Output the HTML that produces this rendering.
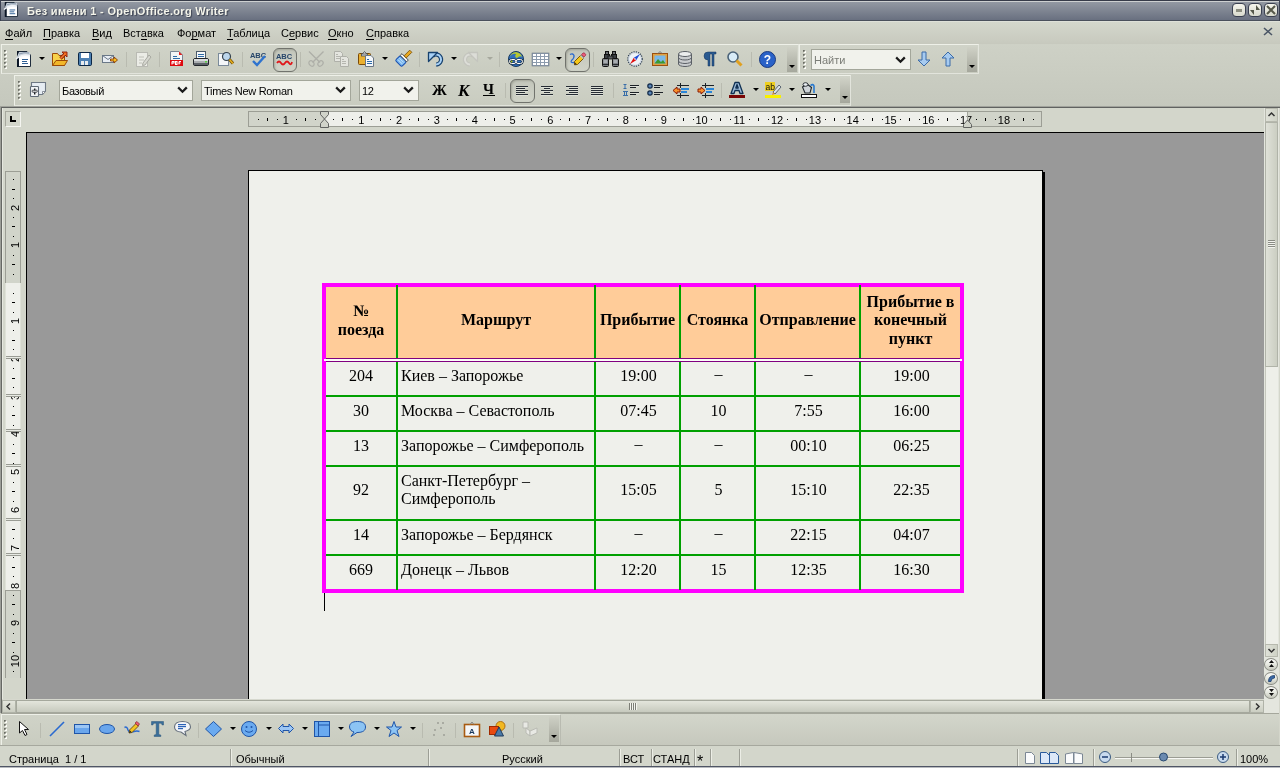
<!DOCTYPE html>
<html><head><meta charset="utf-8">
<style>
*{margin:0;padding:0;box-sizing:border-box}
html,body{width:1280px;height:768px;overflow:hidden;background:#d4d6cb;font-family:"Liberation Sans",sans-serif;font-size:11px;color:#000}
.a{position:absolute}
svg{position:absolute;overflow:visible}
#title{left:0;top:0;width:1280px;height:21px;background:linear-gradient(#959ba4,#697080);border-top:1px solid #363b48;border-bottom:1px solid #4a505c;box-shadow:inset 0 1px 0 #cdd0d0}
#title .t{left:27px;top:4px;font-size:11px;font-weight:bold;color:#f4f4ea;text-shadow:1px 1px 1px #3c4250;white-space:nowrap;letter-spacing:0.32px}
.wb{top:2px;width:14px;height:14px;border:1px solid #3a4050;border-radius:4px;background:linear-gradient(#f4f4ec,#d8dacd)}
#menu{left:0;top:21px;width:1280px;height:23px;background:linear-gradient(#d4d7cc,#c7c9be);border-top:1px solid #dfe1d9}
#menu span{position:absolute;top:5px;white-space:nowrap}
#menu u{text-decoration:none;border-bottom:1px solid #000}
#dock{left:0;top:44px;width:1280px;height:64px;background:linear-gradient(#ced1c6,#c5c8bd);border-bottom:1px solid #606260;box-shadow:inset 0 -1px 0 #a0a29b}
.tb{background:linear-gradient(#d0d3c8,#c9ccc0);border-top:1px solid #eef0e8;border-left:1px solid #eef0e8;border-bottom:1px solid #e2e4dc;border-right:1px solid #e2e4dc}
.sep{width:1px;background:#b9bbb0}
.grip{width:4px;background:repeating-linear-gradient(transparent 0 0px,#7c7e75 0px 1px,#8e9087 1px 2px,#fcfcf7 2px 3px,transparent 3px 4px);-webkit-mask:linear-gradient(90deg,#000 0 3px,transparent 3px)}
.dd{width:0;height:0;border-left:3px solid transparent;border-right:3px solid transparent;border-top:3px solid #000}
.ddg{width:0;height:0;border-left:3px solid transparent;border-right:3px solid transparent;border-top:3px solid #a6a89d}
.ovf{width:10px;background:linear-gradient(#cfd1c6,#a5a79c)}
.ovf:after{content:"";position:absolute;left:2px;bottom:4px;border-left:3px solid transparent;border-right:3px solid transparent;border-top:3px solid #000}
.press{border:1px solid #71736d;border-radius:6px;background:linear-gradient(#c3c6bb,#d0d3c8);box-shadow:inset 1px 1px 2px #a4a79b}
.combo{background:#f1f2ec;border:1px solid #a3a69a;font-size:11px;white-space:nowrap;letter-spacing:-0.3px}
.combo span{position:absolute;left:2px;top:4px}
.doc{background:#999}
.cell{position:absolute;font-family:"Liberation Serif",serif;font-size:16px;line-height:18px;white-space:nowrap;text-align:center}
.hd{font-weight:bold}
.st{position:absolute;top:753px;font-size:11px;white-space:nowrap}
.ssep{position:absolute;top:749px;width:2px;height:17px;border-left:1px solid #9c9e95;border-right:1px solid #eceee6}
</style></head><body><div id="wrap" style="position:absolute;left:0;top:0;width:1280px;height:768px;overflow:hidden;will-change:transform">
<div id="title" class="a">
<svg style="left:3px;top:1px" width="15" height="15" viewBox="0 0 16 16"><path d="M2.5 0.5 L12 0.5 L15.5 4 L15.5 15.5 L2.5 15.5Z" fill="#fff" stroke="#1e2c3c"/><rect x="2" y="0" width="2" height="16" fill="#0b1626"/><path d="M1 8 Q6 2 15 4 L15 1 L4 1 Z" fill="#c9d2dc"/><path d="M1 8 Q7 3 15 5" stroke="#eef2f6" stroke-width="1.3" fill="none"/><path d="M4 3 Q9 1 14 2" stroke="#8898aa" stroke-width="1" fill="none"/><rect x="7" y="8" width="6" height="1" fill="#2e5f94"/><rect x="7" y="10" width="5" height="1" fill="#2e5f94"/><rect x="7" y="12" width="6" height="1" fill="#2e5f94"/></svg>
<div class="a t">Без имени 1 - OpenOffice.org Writer</div>
<div class="a wb" style="left:1232px"><div class="a" style="left:3px;top:5px;width:6px;height:3px;background:#8c8e80"></div></div>
<div class="a wb" style="left:1248px"><svg style="left:1px;top:1px" width="10" height="10"><path d="M6 0 L10 5 L6 5Z M0 5 L4 5 L4 10Z" fill="#55584a"/></svg></div>
<div class="a wb" style="left:1264px"><svg style="left:1px;top:1px" width="10" height="10"><path d="M1 1 L9 9 M9 1 L1 9" stroke="#55584a" stroke-width="2"/></svg></div>
</div>
<div id="menu" class="a">
<span style="left:5px"><u>Ф</u>айл</span>
<span style="left:43px"><u>П</u>равка</span>
<span style="left:92px"><u>В</u>ид</span>
<span style="left:123px">Вст<u>а</u>вка</span>
<span style="left:177px">Фо<u>р</u>мат</span>
<span style="left:227px"><u>Т</u>аблица</span>
<span style="left:281px">С<u>е</u>рвис</span>
<span style="left:328px"><u>О</u>кно</span>
<span style="left:366px"><u>С</u>правка</span>
<svg style="left:1263px;top:5px" width="10" height="9"><path d="M1 1 L9 8 M9 1 L1 8" stroke="#4a5565" stroke-width="1.6"/></svg>
</div>
<div id="dock" class="a"></div>
<div class="a tb" style="left:1px;top:44px;width:798px;height:30px"></div>
<div class="a tb" style="left:799px;top:44px;width:180px;height:30px"></div>
<div class="a tb" style="left:14px;top:75px;width:837px;height:31px"></div>
<svg style="left:4px;top:50px" width="3" height="3"><rect x="0" y="0" width="2" height="2" fill="#7e8077"/><rect x="1" y="1" width="2" height="2" fill="#fdfdf8"/><rect x="0" y="0" width="1" height="1" fill="#6a6c64"/><rect x="1" y="1" width="1" height="1" fill="#b5b7ad"/></svg>
<svg style="left:4px;top:54px" width="3" height="3"><rect x="0" y="0" width="2" height="2" fill="#7e8077"/><rect x="1" y="1" width="2" height="2" fill="#fdfdf8"/><rect x="0" y="0" width="1" height="1" fill="#6a6c64"/><rect x="1" y="1" width="1" height="1" fill="#b5b7ad"/></svg>
<svg style="left:4px;top:58px" width="3" height="3"><rect x="0" y="0" width="2" height="2" fill="#7e8077"/><rect x="1" y="1" width="2" height="2" fill="#fdfdf8"/><rect x="0" y="0" width="1" height="1" fill="#6a6c64"/><rect x="1" y="1" width="1" height="1" fill="#b5b7ad"/></svg>
<svg style="left:4px;top:62px" width="3" height="3"><rect x="0" y="0" width="2" height="2" fill="#7e8077"/><rect x="1" y="1" width="2" height="2" fill="#fdfdf8"/><rect x="0" y="0" width="1" height="1" fill="#6a6c64"/><rect x="1" y="1" width="1" height="1" fill="#b5b7ad"/></svg>
<svg style="left:4px;top:66px" width="3" height="3"><rect x="0" y="0" width="2" height="2" fill="#7e8077"/><rect x="1" y="1" width="2" height="2" fill="#fdfdf8"/><rect x="0" y="0" width="1" height="1" fill="#6a6c64"/><rect x="1" y="1" width="1" height="1" fill="#b5b7ad"/></svg>
<svg style="left:15px;top:51px" width="16" height="16" viewBox="0 0 16 16"><path d="M2.5 0.5 L12 0.5 L15.5 4 L15.5 15.5 L2.5 15.5Z" fill="#fff" stroke="#1e2c3c"/><rect x="2" y="0" width="2" height="16" fill="#0b1626"/><path d="M1 8 Q6 2 15 4 L15 1 L4 1 Z" fill="#c9d2dc"/><path d="M1 8 Q7 3 15 5" stroke="#eef2f6" stroke-width="1.3" fill="none"/><path d="M4 3 Q9 1 14 2" stroke="#8898aa" stroke-width="1" fill="none"/><rect x="7" y="8" width="6" height="1" fill="#2e5f94"/><rect x="7" y="10" width="5" height="1" fill="#2e5f94"/><rect x="7" y="12" width="6" height="1" fill="#2e5f94"/></svg>
<div class="a dd" style="left:39px;top:57px"></div>
<svg style="left:52px;top:51px" width="16" height="16" viewBox="0 0 16 16"><path d="M0.5 2.5 L5.5 2.5 L7 4.5 L12.5 4.5 L12.5 14.5 L0.5 14.5Z" fill="#f7d24a" stroke="#9c4a08"/><path d="M4 9.5 L15.5 9.5 L12.5 14.5 L0.5 14.5Z" fill="#f2b72a" stroke="#9c4a08"/><path d="M8.5 7.5 L13 3" stroke="#8a1c08" stroke-width="3.2"/><path d="M10 1 L15 1 L15 6Z" fill="#f06a1c" stroke="#8a1c08" stroke-width="0.9"/><path d="M8.5 7.5 L13 3" stroke="#f47a2a" stroke-width="1.6"/></svg>
<svg style="left:77px;top:51px" width="16" height="16" viewBox="0 0 16 16"><rect x="1.5" y="1.5" width="13" height="13" rx="1.2" fill="#4d80b2" stroke="#0c2746"/><rect x="4" y="2" width="8" height="5" fill="#fff"/><rect x="4" y="10" width="3" height="4" fill="#e8ecef"/><rect x="8" y="10" width="3" height="4" fill="#e8ecef"/></svg>
<svg style="left:101px;top:48px" width="17" height="17" viewBox="0 0 17 17"><rect x="1.5" y="7.5" width="11" height="7" fill="#e9eef4" stroke="#6a7888"/><path d="M1.5 7.5 L7 11.5 L12.5 7.5" stroke="#6a7888" fill="none"/><path d="M9.5 11 L13 11 L13 9 L16.5 12 L13 15 L13 13 L9.5 13Z" fill="#f8c020" stroke="#8a3a06" stroke-width="0.9"/></svg>
<div class="a sep" style="left:126px;top:52px;height:15px"></div>
<svg style="left:135px;top:51px" width="16" height="16" viewBox="0 0 16 16"><rect x="1.5" y="1.5" width="11" height="14" fill="#ebece6" stroke="#b9bab3"/><path d="M4 6h5M4 9h5M4 12h3" stroke="#bfc0b8"/><path d="M8 12 L14 4 L16 6 L10 14 L7.5 14.5Z" fill="#d6d7d0" stroke="#a9aaa2"/></svg>
<div class="a sep" style="left:159px;top:52px;height:15px"></div>
<svg style="left:168px;top:51px" width="16" height="16" viewBox="0 0 16 16"><path d="M2.5 0.5 L11 0.5 L14.5 4 L14.5 14.5 L2.5 14.5Z" fill="#f2f4f6" stroke="#7a8694"/><path d="M11 0.5 L14.5 4 L11 4Z" fill="#e02020"/><rect x="2" y="9" width="13" height="6" fill="#de0a10"/><path d="M4 10.5v3M4 10.5h2v1.5h-2M7.5 10.5v3h1.5v-3zM11 10.5v3M11 10.5h2M11 12h1.5" stroke="#fff" stroke-width="1.1" fill="none"/><rect x="5" y="5" width="4" height="1" fill="#2d6aa8"/><rect x="5" y="7" width="7" height="1" fill="#2d6aa8"/></svg>
<svg style="left:193px;top:51px" width="16" height="16" viewBox="0 0 16 16"><rect x="3.5" y="0.5" width="9" height="8" fill="#f6f8fa" stroke="#4a5a6a"/><rect x="5" y="3" width="6" height="1" fill="#2d6aa8"/><rect x="5" y="5" width="6" height="1" fill="#2d6aa8"/><rect x="0.5" y="7.5" width="15" height="7" rx="1.5" fill="#a9adb0" stroke="#22272c"/><rect x="1" y="8" width="14" height="2" fill="#d9dcde"/><rect x="1" y="12" width="14" height="2" fill="#5b6066"/><rect x="12" y="10" width="2" height="1.5" fill="#58d040"/></svg>
<svg style="left:218px;top:51px" width="16" height="16" viewBox="0 0 16 16"><rect x="0.5" y="2.5" width="10" height="12" fill="#f4f6f8" stroke="#7a8a9a"/><circle cx="8.5" cy="5.5" r="4" fill="#bcd6ec" stroke="#33404c" stroke-width="1.2"/><path d="M11.5 8.5 L15 12.5" stroke="#6a4a00" stroke-width="3"/><path d="M11.5 8.5 L15 12.5" stroke="#e8b020" stroke-width="1.6"/></svg>
<div class="a sep" style="left:242px;top:52px;height:15px"></div>
<svg style="left:250px;top:51px" width="17" height="16" viewBox="0 0 17 16"><text x="8" y="7" font-size="7.5" font-weight="bold" fill="#27466a" text-anchor="middle" font-family="Liberation Sans">ABC</text><path d="M3 10 L7 14 L15 5" stroke="#2f74cf" stroke-width="2.4" fill="none"/></svg>
<div class="a press" style="left:273px;top:48px;width:24px;height:24px"></div>
<svg style="left:276px;top:51px" width="16" height="16" viewBox="0 0 16 16"><text x="8" y="8" font-size="7.5" font-weight="bold" fill="#27466a" text-anchor="middle" font-family="Liberation Sans">ABC</text><path d="M1 12 Q3 9 5 12 T9 12 T13 12 T16 11" stroke="#e0161a" stroke-width="1.8" fill="none"/></svg>
<div class="a sep" style="left:300px;top:52px;height:15px"></div>
<svg style="left:308px;top:51px" width="16" height="16" viewBox="0 0 16 16"><path d="M1 0.5 L12 11.5 M15.5 0.5 L4.5 11.5" stroke="#aeafa8" stroke-width="1.4"/><g transform="rotate(45 3.5 12.5)"><ellipse cx="3.5" cy="12.5" rx="3" ry="2.2" fill="none" stroke="#aeafa8" stroke-width="1.2"/></g><g transform="rotate(-45 12.5 12.5)"><ellipse cx="12.5" cy="12.5" rx="3" ry="2.2" fill="none" stroke="#aeafa8" stroke-width="1.2"/></g></svg>
<svg style="left:333px;top:51px" width="16" height="16" viewBox="0 0 16 16"><path d="M1.5 0.5 L7.5 0.5 L9.5 2.5 L9.5 10.5 L1.5 10.5Z" fill="#e4e5df" stroke="#afb0a9"/><rect x="3" y="3" width="2" height="1" fill="#b5b6af"/><rect x="3" y="5" width="4" height="1" fill="#b5b6af"/><rect x="3" y="7" width="4" height="1" fill="#b5b6af"/><path d="M7.5 5.5 L13.5 5.5 L15.5 7.5 L15.5 15.5 L7.5 15.5Z" fill="#e4e5df" stroke="#afb0a9"/><rect x="9" y="8" width="2" height="1" fill="#b5b6af"/><rect x="9" y="10" width="4" height="1" fill="#b5b6af"/><rect x="9" y="12" width="4" height="1" fill="#b5b6af"/></svg>
<svg style="left:358px;top:51px" width="16" height="16" viewBox="0 0 16 16"><rect x="0.5" y="2.5" width="12" height="11" rx="1" fill="#eab030" stroke="#7a4a08"/><path d="M4 3.5 L6.5 0.5 L9 3.5Z" fill="#e6e8ea" stroke="#4a4e52" stroke-width="0.9"/><rect x="3.5" y="3" width="6" height="2" fill="#d6d9dc" stroke="#4a4e52" stroke-width="0.8"/><path d="M7.5 4.5 L13 4.5 L15.5 7 L15.5 15.5 L7.5 15.5Z" fill="#f4f7fa" stroke="#6a7684"/><rect x="9" y="8" width="2" height="1" fill="#2d6aa8"/><rect x="9" y="10" width="5" height="1" fill="#2d6aa8"/><rect x="9" y="12" width="5" height="1" fill="#2d6aa8"/></svg>
<div class="a dd" style="left:382px;top:57px"></div>
<svg style="left:395px;top:50px" width="16" height="16" viewBox="0 0 16 16"><g transform="rotate(45 8 9)"><rect x="3.5" y="8.5" width="9" height="7" rx="1.5" fill="#7ab8f0" stroke="#1a50b0"/><path d="M5 11h6M5 13h6" stroke="#d8ecfc" stroke-width="0.8"/><rect x="3.5" y="6" width="9" height="2.5" fill="#f4f6f8" stroke="#30343a" stroke-width="0.8"/><rect x="6.5" y="-2" width="3" height="8" fill="#e8a820" stroke="#7a5008" stroke-width="0.8"/></g></svg>
<div class="a sep" style="left:419px;top:52px;height:15px"></div>
<svg style="left:427px;top:51px" width="16" height="16" viewBox="0 0 16 16"><path d="M5.5 5 A5 5 0 1 1 9 13.5" stroke="#17416e" stroke-width="4.2" fill="none"/><path d="M5.5 5 A5 5 0 1 1 9 13.5" stroke="#a8d0f4" stroke-width="2" fill="none"/><path d="M1.5 1.5 L10.5 1.5 L1.5 10.5 Z" fill="#a8d0f4" stroke="#17416e" stroke-width="1.3" stroke-linejoin="round"/></svg>
<div class="a dd" style="left:451px;top:57px"></div>
<svg style="left:463px;top:51px" width="16" height="16" viewBox="0 0 16 16"><g transform="translate(16,0) scale(-1,1)"><path d="M5.5 5 A5 5 0 1 1 9 13.5" stroke="#c4c5be" stroke-width="4.2" fill="none"/><path d="M5.5 5 A5 5 0 1 1 9 13.5" stroke="#dcddd7" stroke-width="2" fill="none"/><path d="M1.5 1.5 L10.5 1.5 L1.5 10.5 Z" fill="#dcddd7" stroke="#c4c5be" stroke-width="1.3" stroke-linejoin="round"/></g></svg>
<div class="a ddg" style="left:487px;top:57px"></div>
<div class="a sep" style="left:499px;top:52px;height:15px"></div>
<svg style="left:508px;top:51px" width="16" height="16" viewBox="0 0 16 16"><circle cx="8" cy="8" r="7.5" fill="#2f6fc0" stroke="#1a3a5c"/><path d="M2 6 Q4 2 8 3 Q6 6 9 7 Q12 4 14 6 Q13 2 8 1 Q3 1.5 2 6Z" fill="#b8c830"/><path d="M1.5 9 Q3 8 5 10 L3 13Z" fill="#9ab828"/><rect x="1.5" y="8.5" width="6.5" height="4" rx="2" fill="none" stroke="#1a2a3a" stroke-width="2.2"/><rect x="8" y="8.5" width="6.5" height="4" rx="2" fill="none" stroke="#1a2a3a" stroke-width="2.2"/><rect x="1.5" y="8.5" width="6.5" height="4" rx="2" fill="none" stroke="#fff" stroke-width="1"/><rect x="8" y="8.5" width="6.5" height="4" rx="2" fill="none" stroke="#fff" stroke-width="1"/></svg>
<svg style="left:532px;top:53px" width="17" height="13" viewBox="0 0 17 13"><rect x="0" y="0" width="17" height="13" fill="#8d9cae"/><rect x="1" y="1" width="3" height="2" fill="#fff"/><rect x="5" y="1" width="3" height="2" fill="#fff"/><rect x="9" y="1" width="3" height="2" fill="#fff"/><rect x="13" y="1" width="3" height="2" fill="#fff"/><rect x="1" y="4" width="3" height="2" fill="#fff"/><rect x="5" y="4" width="3" height="2" fill="#fff"/><rect x="9" y="4" width="3" height="2" fill="#fff"/><rect x="13" y="4" width="3" height="2" fill="#fff"/><rect x="1" y="7" width="3" height="2" fill="#fff"/><rect x="5" y="7" width="3" height="2" fill="#fff"/><rect x="9" y="7" width="3" height="2" fill="#fff"/><rect x="13" y="7" width="3" height="2" fill="#fff"/><rect x="1" y="10" width="3" height="2" fill="#fff"/><rect x="5" y="10" width="3" height="2" fill="#fff"/><rect x="9" y="10" width="3" height="2" fill="#fff"/><rect x="13" y="10" width="3" height="2" fill="#fff"/><rect x="0" y="0" width="17" height="13" fill="none" stroke="#6d7a88" stroke-width="0.6"/></svg>
<div class="a dd" style="left:556px;top:57px"></div>
<div class="a press" style="left:565px;top:48px;width:25px;height:24px"></div>
<svg style="left:569px;top:51px" width="16" height="16" viewBox="0 0 16 16"><path d="M1 3.5 Q4 2 5 4.5 Q5.5 7 2.5 9.5 Q1 12 5 11.5 L6.5 11" stroke="#2a6ad0" stroke-width="1.3" fill="none"/><path d="M5.5 10.5 L12 4 L15 7 L8.5 13.5 L5.5 13.8Z" fill="#f6c818" stroke="#6a4a08" stroke-width="0.9"/><path d="M11 5 L14 8 L15 7 L12 4Z" fill="#b8c4d0"/><path d="M12.5 3.5 L14 2 Q15 1.5 16 2.5 L16.5 3 Q17 4 16.5 4.5 L15 6Z" fill="#ea5a78" stroke="#9a2a40" stroke-width="0.7"/><path d="M5.5 13.8 L6 11.5 L7.8 13.2Z" fill="#3a2a10"/></svg>
<div class="a sep" style="left:593px;top:52px;height:15px"></div>
<svg style="left:602px;top:51px" width="17" height="16" viewBox="0 0 17 16"><rect x="3.5" y="0.5" width="3" height="4" fill="#6a6e72" stroke="#111" stroke-width="1"/><rect x="10.5" y="0.5" width="3" height="4" fill="#6a6e72" stroke="#111" stroke-width="1"/><rect x="2.5" y="3.5" width="5" height="4" fill="#3a3e42" stroke="#111"/><rect x="9.5" y="3.5" width="5" height="4" fill="#3a3e42" stroke="#111"/><rect x="6" y="5" width="5" height="3" fill="#55595d" stroke="#111" stroke-width="0.8"/><rect x="0.5" y="7.5" width="6" height="8" rx="1" fill="#7a7e82" stroke="#111"/><rect x="10.5" y="7.5" width="6" height="8" rx="1" fill="#7a7e82" stroke="#111"/><rect x="1.5" y="9" width="4" height="3" fill="#a8acb0"/><rect x="11.5" y="9" width="4" height="3" fill="#a8acb0"/><rect x="1" y="13" width="5" height="1" fill="#2a2e32"/><rect x="11" y="13" width="5" height="1" fill="#2a2e32"/></svg>
<svg style="left:627px;top:51px" width="16" height="16" viewBox="0 0 16 16"><circle cx="8" cy="8" r="7.2" fill="#eef3f8" stroke="#2e3e50" stroke-width="1.2" stroke-dasharray="1.2 1.1"/><circle cx="8" cy="8" r="6.4" fill="none" stroke="#9aa8b8" stroke-width="0.6"/><path d="M13 3 L9.2 9.2 L6.8 6.8Z" fill="#1a4ad8"/><path d="M3 13 L6.8 6.8 L9.2 9.2Z" fill="#e01010"/><circle cx="8" cy="8" r="0.8" fill="#fff"/></svg>
<svg style="left:652px;top:51px" width="16" height="16" viewBox="0 0 16 16"><rect x="0.5" y="2.5" width="15" height="12" fill="#e0a040" stroke="#9a5010"/><rect x="2.5" y="4.5" width="11" height="8" fill="#7ab8e8"/><path d="M2.5 12.5 L6 8 L9 11 L11 9 L13.5 12.5Z" fill="#3a9a30"/><path d="M6 2.5 L8 0.5 L10 2.5" stroke="#777" fill="none"/></svg>
<svg style="left:677px;top:51px" width="16" height="16" viewBox="0 0 16 16"><path d="M1.5 3 L1.5 13 A6.5 2.5 0 0 0 14.5 13 L14.5 3" fill="#c9ccce" stroke="#5b6066"/><ellipse cx="8" cy="3" rx="6.5" ry="2.5" fill="#eceeee" stroke="#5b6066"/><path d="M1.5 6.5 A6.5 2.5 0 0 0 14.5 6.5 M1.5 10 A6.5 2.5 0 0 0 14.5 10" stroke="#5b6066" fill="none"/></svg>
<svg style="left:702px;top:51px" width="16" height="16" viewBox="0 0 16 16"><path d="M6 15 L6 9 A4 4 0 0 1 6 1 L14 1 L14 3 L12 3 L12 15 L10 15 L10 3 L8 3 L8 15Z" fill="#2a5a90" stroke="#17375c" stroke-width="0.5"/></svg>
<svg style="left:727px;top:51px" width="16" height="16" viewBox="0 0 16 16"><circle cx="6" cy="6" r="5" fill="#d8ecf8" stroke="#4a6278" stroke-width="1.6"/><path d="M9.5 9.5 L14.5 14.5" stroke="#e0a020" stroke-width="3"/></svg>
<div class="a sep" style="left:751px;top:52px;height:15px"></div>
<svg style="left:759px;top:51px" width="17" height="17" viewBox="0 0 17 17"><circle cx="8.5" cy="8.5" r="8" fill="#2a62c8" stroke="#1a3a80"/><text x="8.5" y="13" font-size="12" font-weight="bold" fill="#fff" text-anchor="middle" font-family="Liberation Sans">?</text></svg>
<div class="a ovf" style="left:787px;top:47px;height:25px"></div>
<svg style="left:803px;top:50px" width="3" height="3"><rect x="0" y="0" width="2" height="2" fill="#7e8077"/><rect x="1" y="1" width="2" height="2" fill="#fdfdf8"/><rect x="0" y="0" width="1" height="1" fill="#6a6c64"/><rect x="1" y="1" width="1" height="1" fill="#b5b7ad"/></svg>
<svg style="left:803px;top:54px" width="3" height="3"><rect x="0" y="0" width="2" height="2" fill="#7e8077"/><rect x="1" y="1" width="2" height="2" fill="#fdfdf8"/><rect x="0" y="0" width="1" height="1" fill="#6a6c64"/><rect x="1" y="1" width="1" height="1" fill="#b5b7ad"/></svg>
<svg style="left:803px;top:58px" width="3" height="3"><rect x="0" y="0" width="2" height="2" fill="#7e8077"/><rect x="1" y="1" width="2" height="2" fill="#fdfdf8"/><rect x="0" y="0" width="1" height="1" fill="#6a6c64"/><rect x="1" y="1" width="1" height="1" fill="#b5b7ad"/></svg>
<svg style="left:803px;top:62px" width="3" height="3"><rect x="0" y="0" width="2" height="2" fill="#7e8077"/><rect x="1" y="1" width="2" height="2" fill="#fdfdf8"/><rect x="0" y="0" width="1" height="1" fill="#6a6c64"/><rect x="1" y="1" width="1" height="1" fill="#b5b7ad"/></svg>
<svg style="left:803px;top:66px" width="3" height="3"><rect x="0" y="0" width="2" height="2" fill="#7e8077"/><rect x="1" y="1" width="2" height="2" fill="#fdfdf8"/><rect x="0" y="0" width="1" height="1" fill="#6a6c64"/><rect x="1" y="1" width="1" height="1" fill="#b5b7ad"/></svg>
<div class="a combo" style="left:811px;top:49px;width:100px;height:21px;color:#7b7d77;font-size:11px;letter-spacing:0"><span style="top:4px;left:2px">Найти</span></div>
<svg style="left:896px;top:57px" width="9" height="6" viewBox="0 0 9 6"><path d="M1 1.2 L4.5 4.7 L8 1.2" stroke="#1a1a1a" stroke-width="2.3" fill="none" stroke-linecap="square"/></svg>
<svg style="left:916px;top:51px" width="16" height="16" viewBox="0 0 16 16"><path d="M6 1 L10 1 L10 9 L14 9 L8 15 L2 9 L6 9Z" fill="#a7cbf0" stroke="#3a6aa8"/></svg>
<svg style="left:940px;top:51px" width="16" height="16" viewBox="0 0 16 16"><path d="M6 15 L10 15 L10 7 L14 7 L8 1 L2 7 L6 7Z" fill="#a7cbf0" stroke="#3a6aa8"/></svg>
<div class="a ovf" style="left:967px;top:47px;height:25px"></div>
<svg style="left:18px;top:81px" width="3" height="3"><rect x="0" y="0" width="2" height="2" fill="#7e8077"/><rect x="1" y="1" width="2" height="2" fill="#fdfdf8"/><rect x="0" y="0" width="1" height="1" fill="#6a6c64"/><rect x="1" y="1" width="1" height="1" fill="#b5b7ad"/></svg>
<svg style="left:18px;top:85px" width="3" height="3"><rect x="0" y="0" width="2" height="2" fill="#7e8077"/><rect x="1" y="1" width="2" height="2" fill="#fdfdf8"/><rect x="0" y="0" width="1" height="1" fill="#6a6c64"/><rect x="1" y="1" width="1" height="1" fill="#b5b7ad"/></svg>
<svg style="left:18px;top:89px" width="3" height="3"><rect x="0" y="0" width="2" height="2" fill="#7e8077"/><rect x="1" y="1" width="2" height="2" fill="#fdfdf8"/><rect x="0" y="0" width="1" height="1" fill="#6a6c64"/><rect x="1" y="1" width="1" height="1" fill="#b5b7ad"/></svg>
<svg style="left:18px;top:93px" width="3" height="3"><rect x="0" y="0" width="2" height="2" fill="#7e8077"/><rect x="1" y="1" width="2" height="2" fill="#fdfdf8"/><rect x="0" y="0" width="1" height="1" fill="#6a6c64"/><rect x="1" y="1" width="1" height="1" fill="#b5b7ad"/></svg>
<svg style="left:18px;top:97px" width="3" height="3"><rect x="0" y="0" width="2" height="2" fill="#7e8077"/><rect x="1" y="1" width="2" height="2" fill="#fdfdf8"/><rect x="0" y="0" width="1" height="1" fill="#6a6c64"/><rect x="1" y="1" width="1" height="1" fill="#b5b7ad"/></svg>
<svg style="left:29px;top:81px" width="18" height="17" viewBox="0 0 18 17"><path d="M2.5 1.5 L16.5 1.5 L16.5 10 L13.5 13.5 L2.5 13.5Z" fill="#e6ecf2" stroke="#6e7884" stroke-width="1.1"/><path d="M13.5 13.5 L13.5 10.5 L16.5 10.5Z" fill="#fff" stroke="#6e7884" stroke-width="0.8"/><rect x="1.5" y="5.5" width="8" height="10" rx="0.8" fill="#f2f4f6" stroke="#606a76" stroke-width="1.1"/><rect x="5" y="7.5" width="1.4" height="6" fill="#1a1e22"/><rect x="3.2" y="9.2" width="5" height="2" rx="0.6" fill="#fff" stroke="#2a2e32" stroke-width="0.9"/></svg>
<div class="a combo" style="left:59px;top:80px;width:134px;height:21px"><span>Базовый</span></div>
<div class="a combo" style="left:201px;top:80px;width:150px;height:21px"><span>Times New Roman</span></div>
<div class="a combo" style="left:359px;top:80px;width:60px;height:21px"><span>12</span></div>
<svg style="left:178px;top:87px" width="9" height="6" viewBox="0 0 9 6"><path d="M1 1.2 L4.5 4.7 L8 1.2" stroke="#1a1a1a" stroke-width="2.3" fill="none" stroke-linecap="square"/></svg>
<svg style="left:336px;top:87px" width="9" height="6" viewBox="0 0 9 6"><path d="M1 1.2 L4.5 4.7 L8 1.2" stroke="#1a1a1a" stroke-width="2.3" fill="none" stroke-linecap="square"/></svg>
<svg style="left:404px;top:87px" width="9" height="6" viewBox="0 0 9 6"><path d="M1 1.2 L4.5 4.7 L8 1.2" stroke="#1a1a1a" stroke-width="2.3" fill="none" stroke-linecap="square"/></svg>
<div class="a" style="left:432px;top:82px;font-family:'Liberation Serif',serif;font-weight:bold;font-size:15px">Ж</div>
<div class="a" style="left:458px;top:81px;font-family:'Liberation Serif',serif;font-weight:bold;font-style:italic;font-size:17px">К</div>
<div class="a" style="left:483px;top:82px;font-family:'Liberation Serif',serif;font-weight:bold;font-size:15px;line-height:15px">Ч</div><div class="a" style="left:483px;top:95px;width:12px;height:1px;background:#000"></div>
<div class="a sep" style="left:505px;top:83px;height:15px"></div>
<div class="a press" style="left:510px;top:79px;width:25px;height:24px"></div>
<svg style="left:516px;top:86px" width="12" height="10" viewBox="0 0 12 10"><rect x="0" y="0" width="12" height="1" fill="#262c34"/><rect x="0" y="1" width="12" height="1" fill="#eef0ea" opacity="0.5"/><rect x="0" y="2" width="9" height="1" fill="#262c34"/><rect x="0" y="3" width="9" height="1" fill="#eef0ea" opacity="0.5"/><rect x="0" y="4" width="12" height="1" fill="#262c34"/><rect x="0" y="5" width="12" height="1" fill="#eef0ea" opacity="0.5"/><rect x="0" y="6" width="9" height="1" fill="#262c34"/><rect x="0" y="7" width="9" height="1" fill="#eef0ea" opacity="0.5"/><rect x="0" y="8" width="12" height="1" fill="#262c34"/><rect x="0" y="9" width="12" height="1" fill="#eef0ea" opacity="0.5"/></svg>
<svg style="left:541px;top:86px" width="12" height="10" viewBox="0 0 12 10"><rect x="0" y="0" width="12" height="1" fill="#262c34"/><rect x="0" y="1" width="12" height="1" fill="#eef0ea" opacity="0.5"/><rect x="3" y="2" width="6" height="1" fill="#262c34"/><rect x="3" y="3" width="6" height="1" fill="#eef0ea" opacity="0.5"/><rect x="0" y="4" width="12" height="1" fill="#262c34"/><rect x="0" y="5" width="12" height="1" fill="#eef0ea" opacity="0.5"/><rect x="3" y="6" width="6" height="1" fill="#262c34"/><rect x="3" y="7" width="6" height="1" fill="#eef0ea" opacity="0.5"/><rect x="0" y="8" width="12" height="1" fill="#262c34"/><rect x="0" y="9" width="12" height="1" fill="#eef0ea" opacity="0.5"/></svg>
<svg style="left:566px;top:86px" width="12" height="10" viewBox="0 0 12 10"><rect x="0" y="0" width="12" height="1" fill="#262c34"/><rect x="0" y="1" width="12" height="1" fill="#eef0ea" opacity="0.5"/><rect x="3" y="2" width="9" height="1" fill="#262c34"/><rect x="3" y="3" width="9" height="1" fill="#eef0ea" opacity="0.5"/><rect x="0" y="4" width="12" height="1" fill="#262c34"/><rect x="0" y="5" width="12" height="1" fill="#eef0ea" opacity="0.5"/><rect x="3" y="6" width="9" height="1" fill="#262c34"/><rect x="3" y="7" width="9" height="1" fill="#eef0ea" opacity="0.5"/><rect x="0" y="8" width="12" height="1" fill="#262c34"/><rect x="0" y="9" width="12" height="1" fill="#eef0ea" opacity="0.5"/></svg>
<svg style="left:591px;top:86px" width="12" height="10" viewBox="0 0 12 10"><rect x="0" y="0" width="12" height="1" fill="#262c34"/><rect x="0" y="1" width="12" height="1" fill="#eef0ea" opacity="0.5"/><rect x="0" y="2" width="12" height="1" fill="#262c34"/><rect x="0" y="3" width="12" height="1" fill="#eef0ea" opacity="0.5"/><rect x="0" y="4" width="12" height="1" fill="#262c34"/><rect x="0" y="5" width="12" height="1" fill="#eef0ea" opacity="0.5"/><rect x="0" y="6" width="12" height="1" fill="#262c34"/><rect x="0" y="7" width="12" height="1" fill="#eef0ea" opacity="0.5"/><rect x="0" y="8" width="12" height="1" fill="#262c34"/><rect x="0" y="9" width="12" height="1" fill="#eef0ea" opacity="0.5"/></svg>
<div class="a sep" style="left:613px;top:83px;height:15px"></div>
<svg style="left:618px;top:80px" width="24" height="20" viewBox="0 0 24 20"><path d="M5 4h3M6.5 4v4M5 8h3" stroke="#3a6ea8" stroke-width="1" fill="none" transform="translate(0.5,0.5)"/><path d="M5 11h5M6.5 11v4M8.5 11v4M5 15h5" stroke="#3a6ea8" stroke-width="1" fill="none" transform="translate(0,0.5)"/><rect x="12" y="5" width="9" height="1" fill="#1c2126"/><rect x="12" y="6" width="9" height="1" fill="#f0f2ec" opacity=".6"/><rect x="12" y="7" width="6" height="1" fill="#1c2126"/><rect x="12" y="12" width="9" height="1" fill="#1c2126"/><rect x="12" y="13" width="9" height="1" fill="#f0f2ec" opacity=".6"/><rect x="12" y="14" width="6" height="1" fill="#1c2126"/></svg>
<svg style="left:643px;top:80px" width="24" height="20" viewBox="0 0 24 20"><circle cx="7" cy="6" r="2.2" fill="#5a86b8" stroke="#132a48" stroke-width="1.2"/><circle cx="7" cy="13" r="2.2" fill="#5a86b8" stroke="#132a48" stroke-width="1.2"/><rect x="11" y="5" width="9" height="1" fill="#1c2126"/><rect x="11" y="7" width="6" height="1" fill="#1c2126"/><rect x="11" y="12" width="9" height="1" fill="#1c2126"/><rect x="11" y="14" width="6" height="1" fill="#1c2126"/></svg>
<svg style="left:672px;top:80px" width="18" height="20" viewBox="0 0 18 20"><rect x="5" y="5" width="12" height="1" fill="#1c2126"/><rect x="8" y="3" width="1" height="5" fill="#1c2126"/><rect x="5" y="15" width="12" height="1" fill="#1c2126"/><rect x="8" y="13" width="1" height="5" fill="#1c2126"/><rect x="9" y="8" width="8" height="2" fill="#2a86d8"/><rect x="9" y="11" width="6" height="2" fill="#2a86d8"/><path d="M8 9 L5 9 L5 7 L1 10.5 L5 14 L5 12 L8 12Z" fill="#f8902a" stroke="#8a1a04" stroke-width="1"/></svg>
<svg style="left:697px;top:80px" width="18" height="20" viewBox="0 0 18 20"><rect x="5" y="5" width="12" height="1" fill="#1c2126"/><rect x="8" y="3" width="1" height="5" fill="#1c2126"/><rect x="5" y="15" width="12" height="1" fill="#1c2126"/><rect x="8" y="13" width="1" height="5" fill="#1c2126"/><rect x="9" y="8" width="8" height="2" fill="#2a86d8"/><rect x="9" y="11" width="6" height="2" fill="#2a86d8"/><path d="M1 9 L4 9 L4 7 L8 10.5 L4 14 L4 12 L1 12Z" fill="#f8902a" stroke="#8a1a04" stroke-width="1"/></svg>
<div class="a sep" style="left:721px;top:83px;height:15px"></div>
<svg style="left:729px;top:82px" width="16" height="16" viewBox="0 0 16 16"><path d="M2 11.5 L6 0.5 L10 0.5 L14 11.5 L11 11.5 L10 8.5 L6 8.5 L5 11.5Z M6.8 6 L9.2 6 L8 2.5Z" fill="#9dbbd8" stroke="#0f2f52" stroke-width="1.3" stroke-linejoin="round"/><rect x="0" y="13" width="16" height="3" fill="#7a0606"/></svg>
<div class="a dd" style="left:753px;top:88px"></div>
<svg style="left:765px;top:82px" width="16" height="16" viewBox="0 0 16 16"><rect x="0" y="0" width="10" height="9" fill="#f0d020"/><text x="0.5" y="8" font-size="8.5" fill="#111" font-family="Liberation Sans">ab</text><path d="M8 10 L14 3 L16 5 L10 12Z" fill="#dde3ea" stroke="#5a6470"/><path d="M8 10 L10 12 L7 13Z" fill="#e09030"/><rect x="0" y="13" width="16" height="3" fill="#f8f000"/></svg>
<div class="a dd" style="left:789px;top:88px"></div>
<svg style="left:801px;top:82px" width="17" height="16" viewBox="0 0 17 16"><path d="M1.5 5 L6 2 L10.5 5.5 L9 11 L4 11 Z" fill="#cfd4d8" stroke="#20262c" stroke-width="1.1"/><ellipse cx="4.5" cy="2.5" rx="2.5" ry="1.8" fill="#e8ecef" stroke="#20262c" stroke-width="0.9"/><path d="M9.5 3.5 Q12 1.5 13 4 L13 11" stroke="#2a7ad0" stroke-width="1.6" fill="none"/><rect x="0.5" y="12.5" width="15" height="3" fill="#fff" stroke="#111"/></svg>
<div class="a dd" style="left:825px;top:88px"></div>
<div class="a ovf" style="left:840px;top:78px;height:25px"></div>
<div class="a" style="left:1px;top:108px;width:1263px;height:24px;background:#d3d6cb"></div>
<div class="a" style="left:1px;top:108px;width:25px;height:591px;background:#d3d6cb"></div>
<div class="a" style="left:5px;top:111px;width:16px;height:16px;border:1px solid #a7a99f;border-right-color:#f4f5f0;border-bottom-color:#f4f5f0"></div>
<div class="a" style="left:10px;top:116px;width:2px;height:6px;background:#000"></div><div class="a" style="left:10px;top:120px;width:6px;height:2px;background:#000"></div>
<div class="a doc" style="left:26px;top:132px;width:1238px;height:567px;border-left:1px solid #000;border-top:1px solid #000"></div>
<div class="a" style="left:248px;top:111px;width:794px;height:16px;background:#d1d4ca;border:1px solid #9c9e95"></div>
<div class="a" style="left:324px;top:112px;width:643px;height:14px;background:#eeefea"></div>
<div class="a" style="left:258px;top:119px;width:1px;height:1px;background:#000"></div>
<div class="a" style="left:267px;top:118px;width:1px;height:3px;background:#000"></div>
<div class="a" style="left:277px;top:119px;width:1px;height:1px;background:#000"></div>
<div class="a" style="left:275.7px;top:114px;width:20px;text-align:center;font-size:11px;line-height:12px">1</div>
<div class="a" style="left:296px;top:119px;width:1px;height:1px;background:#000"></div>
<div class="a" style="left:305px;top:118px;width:1px;height:3px;background:#000"></div>
<div class="a" style="left:315px;top:119px;width:1px;height:1px;background:#000"></div>
<div class="a" style="left:333px;top:119px;width:1px;height:1px;background:#000"></div>
<div class="a" style="left:342px;top:118px;width:1px;height:3px;background:#000"></div>
<div class="a" style="left:352px;top:119px;width:1px;height:1px;background:#000"></div>
<div class="a" style="left:351.3px;top:114px;width:20px;text-align:center;font-size:11px;line-height:12px">1</div>
<div class="a" style="left:371px;top:119px;width:1px;height:1px;background:#000"></div>
<div class="a" style="left:380px;top:118px;width:1px;height:3px;background:#000"></div>
<div class="a" style="left:390px;top:119px;width:1px;height:1px;background:#000"></div>
<div class="a" style="left:389.1px;top:114px;width:20px;text-align:center;font-size:11px;line-height:12px">2</div>
<div class="a" style="left:409px;top:119px;width:1px;height:1px;background:#000"></div>
<div class="a" style="left:418px;top:118px;width:1px;height:3px;background:#000"></div>
<div class="a" style="left:428px;top:119px;width:1px;height:1px;background:#000"></div>
<div class="a" style="left:426.9px;top:114px;width:20px;text-align:center;font-size:11px;line-height:12px">3</div>
<div class="a" style="left:447px;top:119px;width:1px;height:1px;background:#000"></div>
<div class="a" style="left:456px;top:118px;width:1px;height:3px;background:#000"></div>
<div class="a" style="left:466px;top:119px;width:1px;height:1px;background:#000"></div>
<div class="a" style="left:464.7px;top:114px;width:20px;text-align:center;font-size:11px;line-height:12px">4</div>
<div class="a" style="left:485px;top:119px;width:1px;height:1px;background:#000"></div>
<div class="a" style="left:494px;top:118px;width:1px;height:3px;background:#000"></div>
<div class="a" style="left:504px;top:119px;width:1px;height:1px;background:#000"></div>
<div class="a" style="left:502.5px;top:114px;width:20px;text-align:center;font-size:11px;line-height:12px">5</div>
<div class="a" style="left:522px;top:119px;width:1px;height:1px;background:#000"></div>
<div class="a" style="left:531px;top:118px;width:1px;height:3px;background:#000"></div>
<div class="a" style="left:541px;top:119px;width:1px;height:1px;background:#000"></div>
<div class="a" style="left:540.3px;top:114px;width:20px;text-align:center;font-size:11px;line-height:12px">6</div>
<div class="a" style="left:560px;top:119px;width:1px;height:1px;background:#000"></div>
<div class="a" style="left:569px;top:118px;width:1px;height:3px;background:#000"></div>
<div class="a" style="left:579px;top:119px;width:1px;height:1px;background:#000"></div>
<div class="a" style="left:578.1px;top:114px;width:20px;text-align:center;font-size:11px;line-height:12px">7</div>
<div class="a" style="left:598px;top:119px;width:1px;height:1px;background:#000"></div>
<div class="a" style="left:607px;top:118px;width:1px;height:3px;background:#000"></div>
<div class="a" style="left:617px;top:119px;width:1px;height:1px;background:#000"></div>
<div class="a" style="left:615.9px;top:114px;width:20px;text-align:center;font-size:11px;line-height:12px">8</div>
<div class="a" style="left:636px;top:119px;width:1px;height:1px;background:#000"></div>
<div class="a" style="left:645px;top:118px;width:1px;height:3px;background:#000"></div>
<div class="a" style="left:655px;top:119px;width:1px;height:1px;background:#000"></div>
<div class="a" style="left:653.7px;top:114px;width:20px;text-align:center;font-size:11px;line-height:12px">9</div>
<div class="a" style="left:674px;top:119px;width:1px;height:1px;background:#000"></div>
<div class="a" style="left:683px;top:118px;width:1px;height:3px;background:#000"></div>
<div class="a" style="left:693px;top:119px;width:1px;height:1px;background:#000"></div>
<div class="a" style="left:691.5px;top:114px;width:20px;text-align:center;font-size:11px;line-height:12px">10</div>
<div class="a" style="left:711px;top:119px;width:1px;height:1px;background:#000"></div>
<div class="a" style="left:720px;top:118px;width:1px;height:3px;background:#000"></div>
<div class="a" style="left:730px;top:119px;width:1px;height:1px;background:#000"></div>
<div class="a" style="left:729.3px;top:114px;width:20px;text-align:center;font-size:11px;line-height:12px">11</div>
<div class="a" style="left:749px;top:119px;width:1px;height:1px;background:#000"></div>
<div class="a" style="left:758px;top:118px;width:1px;height:3px;background:#000"></div>
<div class="a" style="left:768px;top:119px;width:1px;height:1px;background:#000"></div>
<div class="a" style="left:767.1px;top:114px;width:20px;text-align:center;font-size:11px;line-height:12px">12</div>
<div class="a" style="left:787px;top:119px;width:1px;height:1px;background:#000"></div>
<div class="a" style="left:796px;top:118px;width:1px;height:3px;background:#000"></div>
<div class="a" style="left:806px;top:119px;width:1px;height:1px;background:#000"></div>
<div class="a" style="left:804.9px;top:114px;width:20px;text-align:center;font-size:11px;line-height:12px">13</div>
<div class="a" style="left:825px;top:119px;width:1px;height:1px;background:#000"></div>
<div class="a" style="left:834px;top:118px;width:1px;height:3px;background:#000"></div>
<div class="a" style="left:844px;top:119px;width:1px;height:1px;background:#000"></div>
<div class="a" style="left:842.7px;top:114px;width:20px;text-align:center;font-size:11px;line-height:12px">14</div>
<div class="a" style="left:863px;top:119px;width:1px;height:1px;background:#000"></div>
<div class="a" style="left:872px;top:118px;width:1px;height:3px;background:#000"></div>
<div class="a" style="left:882px;top:119px;width:1px;height:1px;background:#000"></div>
<div class="a" style="left:880.5px;top:114px;width:20px;text-align:center;font-size:11px;line-height:12px">15</div>
<div class="a" style="left:900px;top:119px;width:1px;height:1px;background:#000"></div>
<div class="a" style="left:909px;top:118px;width:1px;height:3px;background:#000"></div>
<div class="a" style="left:919px;top:119px;width:1px;height:1px;background:#000"></div>
<div class="a" style="left:918.3px;top:114px;width:20px;text-align:center;font-size:11px;line-height:12px">16</div>
<div class="a" style="left:938px;top:119px;width:1px;height:1px;background:#000"></div>
<div class="a" style="left:947px;top:118px;width:1px;height:3px;background:#000"></div>
<div class="a" style="left:957px;top:119px;width:1px;height:1px;background:#000"></div>
<div class="a" style="left:956.1px;top:114px;width:20px;text-align:center;font-size:11px;line-height:12px">17</div>
<div class="a" style="left:976px;top:119px;width:1px;height:1px;background:#000"></div>
<div class="a" style="left:985px;top:118px;width:1px;height:3px;background:#000"></div>
<div class="a" style="left:995px;top:119px;width:1px;height:1px;background:#000"></div>
<div class="a" style="left:993.9px;top:114px;width:20px;text-align:center;font-size:11px;line-height:12px">18</div>
<div class="a" style="left:1014px;top:119px;width:1px;height:1px;background:#000"></div>
<div class="a" style="left:1023px;top:118px;width:1px;height:3px;background:#000"></div>
<div class="a" style="left:1033px;top:119px;width:1px;height:1px;background:#000"></div>
<div class="a" style="left:967px;top:112px;width:1px;height:14px;background:#a3a59c"></div>
<svg style="left:320px;top:111px" width="9" height="17"><path d="M0.5 0.5 H8.5 V3.5 L4.5 8 L8.5 12.5 V16.5 H0.5 V12.5 L4.5 8 L0.5 3.5 Z" fill="#d0d3c9" stroke="#606260" stroke-linejoin="miter"/></svg>
<svg style="left:963px;top:119px" width="9" height="9"><path d="M0.5 8.5 L0.5 5.5 L4.5 1 L8.5 5.5 L8.5 8.5Z" fill="#d0d3c9" stroke="#606260"/></svg>
<div class="a" style="left:5px;top:171px;width:16px;height:507px;background:#d1d4ca;border:1px solid #9c9e95;border-bottom:none"></div>
<div class="a" style="left:5px;top:283px;width:16px;height:307px;background:#eeefea;border-left:1px solid #dfe2d8;border-right:1px solid #dfe2d8"></div>
<div class="a" style="left:13px;top:179px;width:1px;height:1px;background:#000"></div>
<div class="a" style="left:12px;top:189px;width:3px;height:1px;background:#000"></div>
<div class="a" style="left:13px;top:198px;width:1px;height:1px;background:#000"></div>
<div class="a" style="left:8px;top:200.6px;width:14px;height:14px;font-size:11px;line-height:14px;text-align:center;transform:rotate(-90deg)">2</div>
<div class="a" style="left:13px;top:217px;width:1px;height:1px;background:#000"></div>
<div class="a" style="left:12px;top:226px;width:3px;height:1px;background:#000"></div>
<div class="a" style="left:13px;top:236px;width:1px;height:1px;background:#000"></div>
<div class="a" style="left:8px;top:238.4px;width:14px;height:14px;font-size:11px;line-height:14px;text-align:center;transform:rotate(-90deg)">1</div>
<div class="a" style="left:13px;top:255px;width:1px;height:1px;background:#000"></div>
<div class="a" style="left:12px;top:264px;width:3px;height:1px;background:#000"></div>
<div class="a" style="left:13px;top:274px;width:1px;height:1px;background:#000"></div>
<div class="a" style="left:13px;top:293px;width:1px;height:1px;background:#000"></div>
<div class="a" style="left:12px;top:302px;width:3px;height:1px;background:#000"></div>
<div class="a" style="left:13px;top:312px;width:1px;height:1px;background:#000"></div>
<div class="a" style="left:8px;top:314.0px;width:14px;height:14px;font-size:11px;line-height:14px;text-align:center;transform:rotate(-90deg)">1</div>
<div class="a" style="left:13px;top:330px;width:1px;height:1px;background:#000"></div>
<div class="a" style="left:12px;top:340px;width:3px;height:1px;background:#000"></div>
<div class="a" style="left:13px;top:349px;width:1px;height:1px;background:#000"></div>
<div class="a" style="left:8px;top:351.8px;width:14px;height:14px;font-size:11px;line-height:14px;text-align:center;transform:rotate(-90deg)">2</div>
<div class="a" style="left:13px;top:368px;width:1px;height:1px;background:#000"></div>
<div class="a" style="left:12px;top:378px;width:3px;height:1px;background:#000"></div>
<div class="a" style="left:13px;top:387px;width:1px;height:1px;background:#000"></div>
<div class="a" style="left:8px;top:389.6px;width:14px;height:14px;font-size:11px;line-height:14px;text-align:center;transform:rotate(-90deg)">3</div>
<div class="a" style="left:13px;top:406px;width:1px;height:1px;background:#000"></div>
<div class="a" style="left:12px;top:415px;width:3px;height:1px;background:#000"></div>
<div class="a" style="left:13px;top:425px;width:1px;height:1px;background:#000"></div>
<div class="a" style="left:8px;top:427.4px;width:14px;height:14px;font-size:11px;line-height:14px;text-align:center;transform:rotate(-90deg)">4</div>
<div class="a" style="left:13px;top:444px;width:1px;height:1px;background:#000"></div>
<div class="a" style="left:12px;top:453px;width:3px;height:1px;background:#000"></div>
<div class="a" style="left:13px;top:463px;width:1px;height:1px;background:#000"></div>
<div class="a" style="left:8px;top:465.2px;width:14px;height:14px;font-size:11px;line-height:14px;text-align:center;transform:rotate(-90deg)">5</div>
<div class="a" style="left:13px;top:482px;width:1px;height:1px;background:#000"></div>
<div class="a" style="left:12px;top:491px;width:3px;height:1px;background:#000"></div>
<div class="a" style="left:13px;top:501px;width:1px;height:1px;background:#000"></div>
<div class="a" style="left:8px;top:503.0px;width:14px;height:14px;font-size:11px;line-height:14px;text-align:center;transform:rotate(-90deg)">6</div>
<div class="a" style="left:13px;top:519px;width:1px;height:1px;background:#000"></div>
<div class="a" style="left:12px;top:529px;width:3px;height:1px;background:#000"></div>
<div class="a" style="left:13px;top:538px;width:1px;height:1px;background:#000"></div>
<div class="a" style="left:8px;top:540.8px;width:14px;height:14px;font-size:11px;line-height:14px;text-align:center;transform:rotate(-90deg)">7</div>
<div class="a" style="left:13px;top:557px;width:1px;height:1px;background:#000"></div>
<div class="a" style="left:12px;top:567px;width:3px;height:1px;background:#000"></div>
<div class="a" style="left:13px;top:576px;width:1px;height:1px;background:#000"></div>
<div class="a" style="left:8px;top:578.6px;width:14px;height:14px;font-size:11px;line-height:14px;text-align:center;transform:rotate(-90deg)">8</div>
<div class="a" style="left:13px;top:595px;width:1px;height:1px;background:#000"></div>
<div class="a" style="left:12px;top:604px;width:3px;height:1px;background:#000"></div>
<div class="a" style="left:13px;top:614px;width:1px;height:1px;background:#000"></div>
<div class="a" style="left:8px;top:616.4px;width:14px;height:14px;font-size:11px;line-height:14px;text-align:center;transform:rotate(-90deg)">9</div>
<div class="a" style="left:13px;top:633px;width:1px;height:1px;background:#000"></div>
<div class="a" style="left:12px;top:642px;width:3px;height:1px;background:#000"></div>
<div class="a" style="left:13px;top:652px;width:1px;height:1px;background:#000"></div>
<div class="a" style="left:8px;top:654.2px;width:14px;height:14px;font-size:11px;line-height:14px;text-align:center;transform:rotate(-90deg)">10</div>
<div class="a" style="left:13px;top:671px;width:1px;height:1px;background:#000"></div>
<div class="a" style="left:6px;top:590px;width:14px;height:1px;background:#9c9e95"></div>
<div class="a" style="left:6px;top:356px;width:15px;height:3px;border-top:1px solid #9a9c94;border-bottom:1px solid #9a9c94;background:#e8eae4"></div>
<div class="a" style="left:6px;top:394px;width:15px;height:3px;border-top:1px solid #9a9c94;border-bottom:1px solid #9a9c94;background:#e8eae4"></div>
<div class="a" style="left:6px;top:429px;width:15px;height:3px;border-top:1px solid #9a9c94;border-bottom:1px solid #9a9c94;background:#e8eae4"></div>
<div class="a" style="left:6px;top:464px;width:15px;height:3px;border-top:1px solid #9a9c94;border-bottom:1px solid #9a9c94;background:#e8eae4"></div>
<div class="a" style="left:6px;top:518px;width:15px;height:3px;border-top:1px solid #9a9c94;border-bottom:1px solid #9a9c94;background:#e8eae4"></div>
<div class="a" style="left:6px;top:553px;width:15px;height:3px;border-top:1px solid #9a9c94;border-bottom:1px solid #9a9c94;background:#e8eae4"></div>
<div class="a" style="left:248px;top:170px;width:795px;height:529px;background:#eff0eb;border:1px solid #000;border-bottom:none"></div>
<div class="a" style="left:1043px;top:172px;width:2px;height:527px;background:#000"></div>
<div class="a" style="left:322px;top:283px;width:642px;height:310px;border:4px solid #ff00ff"></div>
<div class="a" style="left:326px;top:287px;width:634px;height:71px;background:#ffcc99"></div>
<div class="a" style="left:326px;top:358px;width:634px;height:1px;background:#800080"></div>
<div class="a" style="left:324px;top:359px;width:638px;height:2px;background:#fbfdf8"></div>
<div class="a" style="left:326px;top:361px;width:634px;height:1px;background:#800080"></div>
<div class="a" style="left:396px;top:285px;width:2px;height:73px;background:#00a000"></div>
<div class="a" style="left:396px;top:362px;width:2px;height:228px;background:#00a000"></div>
<div class="a" style="left:594px;top:285px;width:2px;height:73px;background:#00a000"></div>
<div class="a" style="left:594px;top:362px;width:2px;height:228px;background:#00a000"></div>
<div class="a" style="left:679px;top:285px;width:2px;height:73px;background:#00a000"></div>
<div class="a" style="left:679px;top:362px;width:2px;height:228px;background:#00a000"></div>
<div class="a" style="left:754px;top:285px;width:2px;height:73px;background:#00a000"></div>
<div class="a" style="left:754px;top:362px;width:2px;height:228px;background:#00a000"></div>
<div class="a" style="left:859px;top:285px;width:2px;height:73px;background:#00a000"></div>
<div class="a" style="left:859px;top:362px;width:2px;height:228px;background:#00a000"></div>
<div class="a" style="left:326px;top:395px;width:634px;height:2px;background:#00a000"></div>
<div class="a" style="left:326px;top:430px;width:634px;height:2px;background:#00a000"></div>
<div class="a" style="left:326px;top:465px;width:634px;height:2px;background:#00a000"></div>
<div class="a" style="left:326px;top:519px;width:634px;height:2px;background:#00a000"></div>
<div class="a" style="left:326px;top:554px;width:634px;height:2px;background:#00a000"></div>
<div class="a" style="left:324px;top:593px;width:1px;height:18px;background:#000"></div>
<div class="cell hd" style="left:326px;width:70px;top:302.1px;line-height:18.4px">№<br>поезда</div>
<div class="cell hd" style="left:398px;width:196px;top:311.3px;line-height:18.4px">Маршрут</div>
<div class="cell hd" style="left:596px;width:83px;top:311.3px;line-height:18.4px">Прибытие</div>
<div class="cell hd" style="left:681px;width:73px;top:311.3px;line-height:18.4px">Стоянка</div>
<div class="cell hd" style="left:756px;width:103px;top:311.3px;line-height:18.4px">Отправление</div>
<div class="cell hd" style="left:861px;width:99px;top:292.9px;line-height:18.4px">Прибытие в<br>конечный<br>пункт</div>
<div class="cell" style="left:401px;top:367.3px;line-height:18.4px;text-align:left">Киев – Запорожье</div>
<div class="cell" style="left:326px;width:70px;top:367.3px;line-height:18.4px">204</div>
<div class="cell" style="left:597px;width:83px;top:367.3px;line-height:18.4px">19:00</div>
<div class="cell" style="left:682px;width:73px;top:365.3px;line-height:18.4px">–</div>
<div class="cell" style="left:757px;width:103px;top:365.3px;line-height:18.4px">–</div>
<div class="cell" style="left:862px;width:99px;top:367.3px;line-height:18.4px">19:00</div>
<div class="cell" style="left:401px;top:402.3px;line-height:18.4px;text-align:left">Москва – Севастополь</div>
<div class="cell" style="left:326px;width:70px;top:402.3px;line-height:18.4px">30</div>
<div class="cell" style="left:597px;width:83px;top:402.3px;line-height:18.4px">07:45</div>
<div class="cell" style="left:682px;width:73px;top:402.3px;line-height:18.4px">10</div>
<div class="cell" style="left:757px;width:103px;top:402.3px;line-height:18.4px">7:55</div>
<div class="cell" style="left:862px;width:99px;top:402.3px;line-height:18.4px">16:00</div>
<div class="cell" style="left:401px;top:437.3px;line-height:18.4px;text-align:left">Запорожье – Симферополь</div>
<div class="cell" style="left:326px;width:70px;top:437.3px;line-height:18.4px">13</div>
<div class="cell" style="left:597px;width:83px;top:435.3px;line-height:18.4px">–</div>
<div class="cell" style="left:682px;width:73px;top:435.3px;line-height:18.4px">–</div>
<div class="cell" style="left:757px;width:103px;top:437.3px;line-height:18.4px">00:10</div>
<div class="cell" style="left:862px;width:99px;top:437.3px;line-height:18.4px">06:25</div>
<div class="cell" style="left:401px;top:471.6px;line-height:18.4px;text-align:left">Санкт-Петербург –<br>Симферополь</div>
<div class="cell" style="left:326px;width:70px;top:480.8px;line-height:18.4px">92</div>
<div class="cell" style="left:597px;width:83px;top:480.8px;line-height:18.4px">15:05</div>
<div class="cell" style="left:682px;width:73px;top:480.8px;line-height:18.4px">5</div>
<div class="cell" style="left:757px;width:103px;top:480.8px;line-height:18.4px">15:10</div>
<div class="cell" style="left:862px;width:99px;top:480.8px;line-height:18.4px">22:35</div>
<div class="cell" style="left:401px;top:526.3px;line-height:18.4px;text-align:left">Запорожье – Бердянск</div>
<div class="cell" style="left:326px;width:70px;top:526.3px;line-height:18.4px">14</div>
<div class="cell" style="left:597px;width:83px;top:524.3px;line-height:18.4px">–</div>
<div class="cell" style="left:682px;width:73px;top:524.3px;line-height:18.4px">–</div>
<div class="cell" style="left:757px;width:103px;top:526.3px;line-height:18.4px">22:15</div>
<div class="cell" style="left:862px;width:99px;top:526.3px;line-height:18.4px">04:07</div>
<div class="cell" style="left:401px;top:561.3px;line-height:18.4px;text-align:left">Донецк – Львов</div>
<div class="cell" style="left:326px;width:70px;top:561.3px;line-height:18.4px">669</div>
<div class="cell" style="left:597px;width:83px;top:561.3px;line-height:18.4px">12:20</div>
<div class="cell" style="left:682px;width:73px;top:561.3px;line-height:18.4px">15</div>
<div class="cell" style="left:757px;width:103px;top:561.3px;line-height:18.4px">12:35</div>
<div class="cell" style="left:862px;width:99px;top:561.3px;line-height:18.4px">16:30</div>
<div class="a" style="left:1264px;top:108px;width:15px;height:605px;background:#e4e6de"></div>
<div class="a" style="left:1265px;top:108px;width:13px;height:14px;border:1px solid #b7b9ae;background:linear-gradient(90deg,#dfe1d8,#cfd2c6)"></div>
<svg style="left:1268px;top:112px" width="7" height="5"><path d="M0.5 4 L3.5 1 L6.5 4" stroke="#333" stroke-width="1.5" fill="none"/></svg>
<div class="a" style="left:1265px;top:122px;width:13px;height:245px;border:1px solid #b0b3a8;background:linear-gradient(90deg,#dfe1d8,#cbcec2)"></div>
<div class="a" style="left:1268px;top:240px;width:7px;height:8px;background:repeating-linear-gradient(#8a8c84 0 1px,#f2f3ee 1px 2px)"></div>
<div class="a" style="left:1265px;top:367px;width:13px;height:277px;background:#eeefe9;border-left:1px solid #c5c7bd"></div>
<div class="a" style="left:1265px;top:644px;width:13px;height:13px;border:1px solid #b7b9ae;background:linear-gradient(90deg,#dfe1d8,#cfd2c6)"></div>
<svg style="left:1268px;top:648px" width="7" height="5"><path d="M0.5 1 L3.5 4 L6.5 1" stroke="#333" stroke-width="1.5" fill="none"/></svg>
<div class="a" style="left:1264px;top:658px;width:14px;height:13px;border-radius:50%;border:1px solid #8a8c84;background:linear-gradient(#fbfbf8,#e6e8e0 50%,#c5c7bc)"></div>
<svg style="left:1268px;top:660px" width="7" height="9"><path d="M3.5 0 L6 3 L1 3Z M3.5 4 L6 7 L1 7Z" fill="#111"/></svg>
<div class="a" style="left:1264px;top:672px;width:14px;height:13px;border-radius:50%;border:1px solid #8a8c84;background:linear-gradient(#fbfbf8,#e6e8e0 50%,#c5c7bc)"></div>
<svg style="left:1267px;top:674px" width="9" height="9"><path d="M1.5 7.5 Q1.5 1.5 7.5 1.5 L7.5 4 Q4 4 4 7.5Z" fill="#3a6aa8" stroke="#1a3a68" stroke-width="0.8"/></svg>
<div class="a" style="left:1264px;top:686px;width:14px;height:13px;border-radius:50%;border:1px solid #8a8c84;background:linear-gradient(#fbfbf8,#e6e8e0 50%,#c5c7bc)"></div>
<svg style="left:1268px;top:689px" width="7" height="9"><path d="M1 0 L6 0 L3.5 3Z M1 4 L6 4 L3.5 7Z" fill="#111"/></svg>
<div class="a" style="left:1px;top:699px;width:1263px;height:14px;background:#d6d8ce"></div>
<div class="a" style="left:2px;top:700px;width:14px;height:13px;border:1px solid #b0b3a8;background:linear-gradient(#e3e5dc,#cbcec2)"></div>
<svg style="left:6px;top:703px" width="5" height="7"><path d="M4 0.5 L1 3.5 L4 6.5" stroke="#333" stroke-width="1.5" fill="none"/></svg>
<div class="a" style="left:16px;top:700px;width:1234px;height:13px;border:1px solid #a5a89d;background:linear-gradient(#e3e5dc,#c7cabe)"></div>
<div class="a" style="left:629px;top:703px;width:8px;height:7px;background:repeating-linear-gradient(90deg,#7d7f77 0 1px,#f4f5f0 1px 2px)"></div>
<div class="a" style="left:1250px;top:700px;width:14px;height:13px;border:1px solid #b0b3a8;background:linear-gradient(#e3e5dc,#cbcec2)"></div>
<svg style="left:1255px;top:703px" width="5" height="7"><path d="M1 0.5 L4 3.5 L1 6.5" stroke="#333" stroke-width="1.5" fill="none"/></svg>
<div class="a" style="left:0;top:107px;width:1px;height:606px;background:#9c9e98"></div><div class="a" style="left:1px;top:107px;width:1px;height:606px;background:#666864"></div><div class="a" style="left:2px;top:108px;width:1px;height:591px;background:#e6e8e0"></div>
<div class="a" style="left:0;top:0;width:1px;height:21px;background:#3a4050"></div><div class="a" style="left:1279px;top:0;width:1px;height:21px;background:#3a4050"></div>
<div class="a" style="left:1px;top:713px;width:1278px;height:32px;background:linear-gradient(#d3d6cb,#c6c8bd);border-top:1px solid #a5a79c"></div>
<div class="a tb" style="left:1px;top:714px;width:560px;height:31px;border-bottom:none;border-right:1px solid #b9bbb1"></div>
<svg style="left:4px;top:720px" width="3" height="3"><rect x="0" y="0" width="2" height="2" fill="#7e8077"/><rect x="1" y="1" width="2" height="2" fill="#fdfdf8"/><rect x="0" y="0" width="1" height="1" fill="#6a6c64"/><rect x="1" y="1" width="1" height="1" fill="#b5b7ad"/></svg>
<svg style="left:4px;top:724px" width="3" height="3"><rect x="0" y="0" width="2" height="2" fill="#7e8077"/><rect x="1" y="1" width="2" height="2" fill="#fdfdf8"/><rect x="0" y="0" width="1" height="1" fill="#6a6c64"/><rect x="1" y="1" width="1" height="1" fill="#b5b7ad"/></svg>
<svg style="left:4px;top:728px" width="3" height="3"><rect x="0" y="0" width="2" height="2" fill="#7e8077"/><rect x="1" y="1" width="2" height="2" fill="#fdfdf8"/><rect x="0" y="0" width="1" height="1" fill="#6a6c64"/><rect x="1" y="1" width="1" height="1" fill="#b5b7ad"/></svg>
<svg style="left:4px;top:732px" width="3" height="3"><rect x="0" y="0" width="2" height="2" fill="#7e8077"/><rect x="1" y="1" width="2" height="2" fill="#fdfdf8"/><rect x="0" y="0" width="1" height="1" fill="#6a6c64"/><rect x="1" y="1" width="1" height="1" fill="#b5b7ad"/></svg>
<svg style="left:4px;top:736px" width="3" height="3"><rect x="0" y="0" width="2" height="2" fill="#7e8077"/><rect x="1" y="1" width="2" height="2" fill="#fdfdf8"/><rect x="0" y="0" width="1" height="1" fill="#6a6c64"/><rect x="1" y="1" width="1" height="1" fill="#b5b7ad"/></svg>
<svg style="left:19px;top:721px" width="10" height="15" viewBox="0 0 10 15"><path d="M0.5 0.5 L0.5 12 L3.5 9.5 L6 14.5 L8 13.5 L5.5 8.5 L9.5 8.5Z" fill="#fff" stroke="#111"/></svg>
<div class="a sep" style="left:40px;top:723px;height:15px"></div>
<svg style="left:49px;top:721px" width="16" height="16" viewBox="0 0 16 16"><path d="M1 15 L15 1" stroke="#2a6ad0" stroke-width="1.6"/></svg>
<svg style="left:74px;top:724px" width="16" height="10" viewBox="0 0 16 10"><rect x="0.5" y="0.5" width="15" height="9" fill="#6aa6ec" stroke="#1f55a8"/><rect x="1" y="1" width="14" height="3" fill="#9cc6f4"/></svg>
<svg style="left:99px;top:724px" width="16" height="10" viewBox="0 0 16 10"><ellipse cx="8" cy="5" rx="7.5" ry="4.5" fill="#6aa6ec" stroke="#1f55a8"/></svg>
<svg style="left:124px;top:721px" width="16" height="16" viewBox="0 0 16 16"><path d="M0.5 6.5 Q3 5 4 9 Q5 12 10 10.5 Q13 9.5 15.5 10.5" stroke="#2a6ad0" stroke-width="1.5" fill="none"/><path d="M5.5 9 L12 2.5 L14.5 5 L8 11.5 L5 12Z" fill="#f4c420" stroke="#6a4a10" stroke-width="0.9"/><path d="M11 2 L13 0.5 L15.5 3 L14 5Z" fill="#e85a70" stroke="#8a2a30" stroke-width="0.7"/><path d="M5 12 L6 9.5 L7.5 11Z" fill="#222"/></svg>
<svg style="left:151px;top:721px" width="13" height="16" viewBox="0 0 13 16"><path d="M0.5 0.5 L12.5 0.5 L12.5 4 L11.2 4 L10.2 2.2 L7.8 2.2 L7.8 13.5 L9.8 14 L9.8 15.5 L3.2 15.5 L3.2 14 L5.2 13.5 L5.2 2.2 L2.8 2.2 L1.8 4 L0.5 4Z" fill="#3a6e9a" stroke="#2a5478" stroke-width="0.5"/></svg>
<svg style="left:174px;top:721px" width="17" height="16" viewBox="0 0 17 16"><path d="M8.5 0.5 C3.5 0.5 0.5 2.5 0.5 6 C0.5 9 3 11 7 11 L12 14.5 L11 10.5 C14.5 9.5 16.5 8 16.5 6 C16.5 2.5 13.5 0.5 8.5 0.5Z" fill="#f2f4f8" stroke="#646e7a" stroke-width="1.1"/><rect x="4" y="3" width="8" height="1.2" fill="#2a62b8"/><rect x="4" y="5" width="8" height="1.2" fill="#2a62b8"/><rect x="4" y="7" width="5" height="1.2" fill="#2a62b8"/></svg>
<div class="a sep" style="left:198px;top:723px;height:15px"></div>
<svg style="left:205px;top:721px" width="17" height="16" viewBox="0 0 17 16"><path d="M8.5 0.5 L16.5 8 L8.5 15.5 L0.5 8Z" fill="#6aaaf0" stroke="#1f55a8"/></svg>
<div class="a dd" style="left:230px;top:727px"></div>
<svg style="left:241px;top:721px" width="16" height="16" viewBox="0 0 16 16"><circle cx="8" cy="8" r="7.5" fill="#6aaaf0" stroke="#1f55a8"/><circle cx="5.5" cy="6" r="1" fill="#1f55a8"/><circle cx="10.5" cy="6" r="1" fill="#1f55a8"/><path d="M4 9.5 Q8 13 12 9.5" stroke="#1f55a8" fill="none"/></svg>
<div class="a dd" style="left:266px;top:727px"></div>
<svg style="left:278px;top:723px" width="16" height="11" viewBox="0 0 16 11"><path d="M0.5 5.5 L5 1 L5 3.5 L11 3.5 L11 1 L15.5 5.5 L11 10 L11 7.5 L5 7.5 L5 10Z" fill="#9cc6f4" stroke="#1f55a8"/></svg>
<div class="a dd" style="left:302px;top:727px"></div>
<svg style="left:314px;top:721px" width="16" height="16" viewBox="0 0 16 16"><rect x="0.5" y="0.5" width="15" height="15" fill="#6aaaf0" stroke="#1f55a8"/><path d="M4.5 1v14M4.5 4h11" stroke="#1f55a8"/></svg>
<div class="a dd" style="left:338px;top:727px"></div>
<svg style="left:349px;top:721px" width="17" height="16" viewBox="0 0 17 16"><path d="M8.5 0.5 C3 0.5 0.5 2.5 0.5 6 C0.5 9 3 10.5 5 11 L2 15.5 L8 11.5 C14 11.5 16.5 9.5 16.5 6 C16.5 2.5 14 0.5 8.5 0.5Z" fill="#8cc4f4" stroke="#1f55a8"/></svg>
<div class="a dd" style="left:374px;top:727px"></div>
<svg style="left:386px;top:721px" width="16" height="16" viewBox="0 0 16 16"><path d="M8 0.5 L10 6 L15.5 6 L11 9.5 L13 15.5 L8 12 L3 15.5 L5 9.5 L0.5 6 L6 6Z" fill="#8cc4f4" stroke="#1f55a8"/></svg>
<div class="a dd" style="left:410px;top:727px"></div>
<div class="a sep" style="left:422px;top:723px;height:15px"></div>
<svg style="left:431px;top:721px" width="16" height="16" viewBox="0 0 16 16"><g fill="none" stroke="#a9aba2"><path d="M7 1l1 1-1 1-1-1z M12 1l1 1-1 1-1-1z M10 6l1 1-1 1-1-1z M4 8l1 1-1 1-1-1z M3 13l1 1-1 1-1-1z M13 13l1 1-1 1-1-1z"/></g></svg>
<div class="a sep" style="left:455px;top:723px;height:15px"></div>
<svg style="left:464px;top:721px" width="16" height="16" viewBox="0 0 16 16"><rect x="0.5" y="3.5" width="15" height="12" fill="#f4f6f8" stroke="#a85a10" stroke-width="1.6"/><text x="8" y="13" font-size="8" font-weight="bold" fill="#17375c" text-anchor="middle" font-family="Liberation Sans">A</text><path d="M6 3.5 L8 1 L10 3.5" stroke="#888" fill="none"/></svg>
<svg style="left:489px;top:721px" width="16" height="16" viewBox="0 0 16 16"><circle cx="11.5" cy="5" r="4.5" fill="#f2b820" stroke="#b07010"/><rect x="0.5" y="5.5" width="9" height="8" fill="#e84a10" stroke="#a02a00"/><path d="M10 6 L14.5 15 L5.5 15Z" fill="#4a7aa8" stroke="#1f3a5c"/></svg>
<div class="a sep" style="left:513px;top:723px;height:15px"></div>
<svg style="left:522px;top:721px" width="16" height="16" viewBox="0 0 16 16"><g fill="#e8e9e4" stroke="#b9bab3"><path d="M1 1h5v6h-5z"/><path d="M4 7l4 3v5l-4-3z"/><path d="M8 10l7-3v5l-7 3z"/></g></svg>
<div class="a ovf" style="left:549px;top:716px;height:26px"></div>
<div class="a" style="left:0;top:745px;width:1280px;height:23px;background:#d3d6cb;border-top:1px solid #a6a89e"></div>
<div class="a" style="left:0;top:766px;width:1280px;height:1px;background:#4f5565"></div><div class="a" style="left:0;top:767px;width:1280px;height:1px;background:#b9bcc0"></div>
<div class="st" style="left:9px">Страница&nbsp; 1 / 1</div>
<div class="ssep" style="left:230px"></div>
<div class="st" style="left:236px">Обычный</div>
<div class="ssep" style="left:428px"></div>
<div class="st" style="left:502px">Русский</div>
<div class="ssep" style="left:619px"></div>
<div class="st" style="left:623px">ВСТ</div>
<div class="ssep" style="left:651px"></div>
<div class="st" style="left:653px">СТАНД</div>
<div class="ssep" style="left:694px"></div>
<div class="st" style="left:697px;top:753px;font-size:16px">*</div>
<div class="ssep" style="left:710px"></div>
<div class="ssep" style="left:739px"></div>
<div class="ssep" style="left:1017px"></div>
<svg style="left:1025px;top:752px" width="10" height="12" viewBox="0 0 10 12"><path d="M0.5 0.5 L6.5 0.5 L9.5 3.5 L9.5 11.5 L0.5 11.5Z" fill="#fafbfc" stroke="#7b8794"/></svg>
<svg style="left:1040px;top:752px" width="19" height="12" viewBox="0 0 19 12"><path d="M0.5 0.5 L6.5 0.5 L9.5 3.5 L9.5 11.5 L0.5 11.5Z M9.5 0.5 L15.5 0.5 L18.5 3.5 L18.5 11.5 L9.5 11.5Z" fill="#dce8f8" stroke="#2a5a9a"/></svg>
<svg style="left:1065px;top:752px" width="18" height="12" viewBox="0 0 18 12"><path d="M0.5 2 L8.5 0.5 L8.5 11.5 L0.5 11.5Z M9 0.5 L17.5 2 L17.5 11.5 L9 11.5Z" fill="#fafbfc" stroke="#7b8794"/></svg>
<div class="ssep" style="left:1093px"></div>
<svg style="left:1099px;top:751px" width="12" height="12" viewBox="0 0 12 12"><circle cx="6" cy="6" r="5.5" fill="#c8daee" stroke="#3a5a80"/><path d="M3 6h6" stroke="#1a3a70" stroke-width="1.5"/></svg>
<div class="a" style="left:1115px;top:757px;width:98px;height:2px;background:#f8f9f5;border-top:1px solid #9a9c93"></div>
<div class="a" style="left:1131px;top:753px;width:1px;height:9px;background:#8a8c84"></div>
<svg style="left:1159px;top:752px" width="9" height="10" viewBox="0 0 9 10"><circle cx="4.5" cy="5" r="4" fill="#6a8ab0" stroke="#2a4a70"/></svg>
<svg style="left:1217px;top:751px" width="12" height="12" viewBox="0 0 12 12"><circle cx="6" cy="6" r="5.5" fill="#c8daee" stroke="#3a5a80"/><path d="M3 6h6M6 3v6" stroke="#1a3a70" stroke-width="1.5"/></svg>
<div class="ssep" style="left:1236px"></div>
<div class="st" style="left:1240px">100%</div>
</div></body></html>
